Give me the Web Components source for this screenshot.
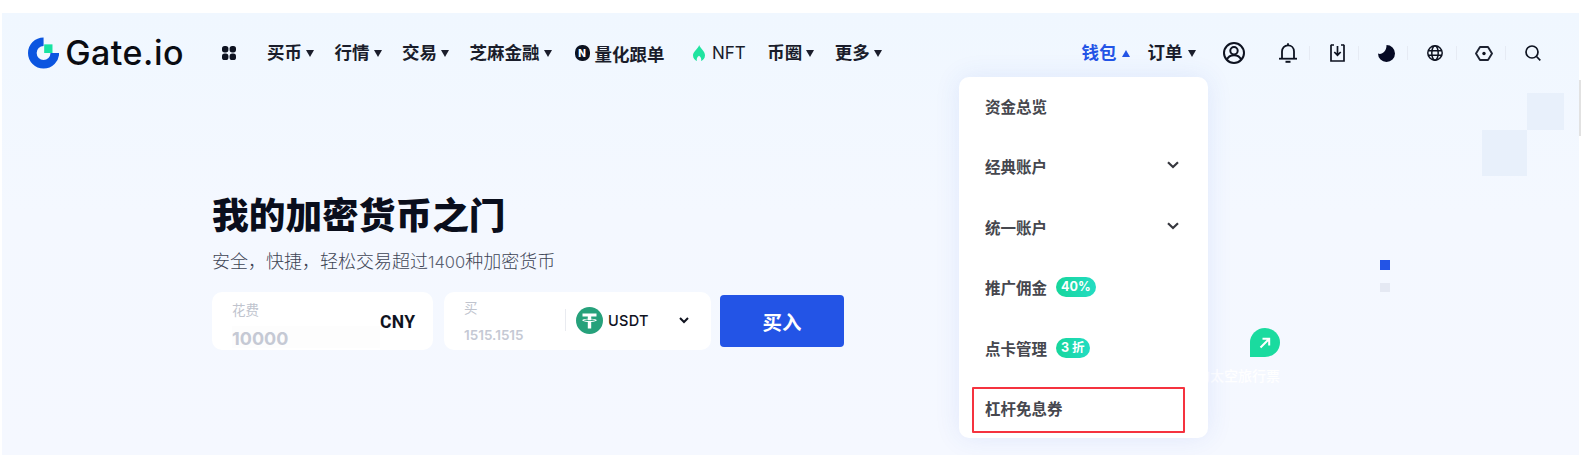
<!DOCTYPE html>
<html lang="zh-CN"><head><meta charset="utf-8"><title>Gate.io</title>
<style>
html,body{margin:0;padding:0;background:#fff;overflow:hidden}
body{font-family:Inter,"Noto Sans CJK SC","Noto Sans",sans-serif}
</style></head><body>
<gate-page>
  <gate-nav slot="nav"></gate-nav>
  <gate-hero slot="hero"></gate-hero>
  <gate-deco slot="deco"></gate-deco>
  <wallet-menu slot="menu"></wallet-menu>
</gate-page>
<script>
const FONT='Inter,"Noto Sans CJK SC","Noto Sans",sans-serif';
function def(name,css,html){
  customElements.define(name,class extends HTMLElement{
    constructor(){super();const r=this.attachShadow({mode:'open'});
      r.innerHTML='<style>'+css+'</style>'+html(this);}
  });
}
def('gate-page',`
:host{display:block;position:relative;margin:13px 2px 0;height:442px;font-family:${FONT};
background:linear-gradient(180deg,#f0f7ff 0%,#f4f8ff 45%,#f5f8ff 100%)}
.bar{position:absolute;right:-2px;top:67px;width:2px;height:56px;background:#e2e2e2}
`,()=>`<slot name="deco"></slot><slot name="nav"></slot><slot name="hero"></slot><slot name="menu"></slot><div class="bar"></div>`);

def('nav-item',`
:host{display:flex;align-items:center;gap:var(--g,5px);font-size:17.5px;font-weight:700;color:#1a1d2b;line-height:24px;white-space:nowrap}
:host([active]){color:#2354e6}
i{width:0;height:0;border-left:4.5px solid transparent;border-right:4.5px solid transparent;border-top:7px solid currentColor;margin-top:1px}
:host([active]) i{border-top:0;border-bottom:7px solid currentColor}
`,()=>`<slot></slot><i></i>`);

def('icon-slot',`
:host{display:flex;align-items:center;justify-content:center;box-sizing:border-box;width:49px;height:24px;padding-left:5px;position:relative}
:host(:not([last]))::after{content:"";position:absolute;right:0;top:5px;height:14px;width:1px;background:#e6ebf4}
`,()=>`<slot></slot>`);

def('gate-nav',`
:host{display:flex;align-items:center;height:80px;box-sizing:border-box;padding:0 24px 0 26px}
.logo{display:flex;align-items:center;gap:6px;width:156px;flex:none}
.word{font-size:34px;font-weight:500;color:#0a0c12;letter-spacing:.5px;line-height:36px}
.left,.right{display:flex;align-items:center}
.left{gap:20.5px;margin-left:38px;--g:4px}
.right{margin-left:auto;gap:18px}
.grid{margin-right:10.5px;display:block}
.pre{display:flex;align-items:center;gap:5px;font-size:17.5px;font-weight:700;color:#1a1d2b;white-space:nowrap;margin-left:2.5px}
.n{width:15px;height:16px;border-radius:7px;background:#0d1220;color:#fff;font-size:10px;font-weight:800;display:flex;align-items:center;justify-content:center;line-height:1}
.pre.nft{font-weight:400;font-size:17px;margin-left:8px;gap:7px;margin-right:1px}
.icons{display:flex;align-items:center;margin-left:1.5px}
.user{margin:0 16px 0 8px;display:block}
svg{display:block}
`,()=>`
<div class="logo">
 <svg width="36" height="36" viewBox="0 0 36 36"><path d="M18 0A18 18 0 1 0 36 18H26A8 8 0 1 1 18 10Z" fill="#0b55e0"/><rect x="18.7" y="8" width="9.6" height="10" fill="#17e3a2"/></svg>
 <span class="word">Gate.io</span>
</div>
<div class="left">
 <svg class="grid" width="14" height="14" viewBox="0 0 14 14" fill="#0d1220"><rect width="6.4" height="6.4" rx="2.6"/><rect x="7.6" width="6.4" height="6.4" rx="2.6"/><rect y="7.6" width="6.4" height="6.4" rx="2.6"/><rect x="7.6" y="7.6" width="6.4" height="6.4" rx="2.6"/></svg>
 <nav-item>买币</nav-item><nav-item>行情</nav-item><nav-item>交易</nav-item><nav-item>芝麻金融</nav-item>
 <div class="pre"><span class="n">N</span><span>量化跟单</span></div>
 <div class="pre nft"><svg width="12" height="16" viewBox="0 0 12 16"><path d="M6.200 0C7 3 12 6 12 10.300 12 13.600 10 15.400 8 16 8.800 13.800 7.800 12.200 6 10.800 4.200 12.200 3.200 13.800 4 16 2 15.400 0 13.600 0 10.300 0 6.500 5 4 6.200 0Z" fill="#1fe3a0"/></svg><span>NFT</span></div>
 <nav-item>币圈</nav-item><nav-item>更多</nav-item>
</div>
<div class="right">
 <nav-item active>钱包</nav-item><nav-item>订单</nav-item>
 <div class="icons">
  <svg class="user" width="22" height="22" viewBox="0 0 22 22" fill="none" stroke="#0d1220" stroke-width="2"><circle cx="11" cy="11" r="10"/><circle cx="11" cy="8.700" r="3.700"/><path d="M3.800 18C5 14.800 7.700 13.200 11 13.200S17 14.800 18.200 18"/></svg>
  <icon-slot><svg width="18" height="20" viewBox="0 0 18 20" fill="none" stroke="#0d1220" stroke-width="1.800"><path d="M3 15.500V8.500C3 5 5.500 2.300 9 2.300S15 5 15 8.500V15.500"/><path d="M0 15.700H18"/><path d="M9 .2V2.300" /><path d="M6.500 18.800H11.500" stroke-width="2"/></svg></icon-slot>
  <icon-slot><svg width="15" height="18" viewBox="0 0 15 18" fill="none" stroke="#0d1220" stroke-width="1.700"><path d="M1 .8V17H14V.8"/><path d="M1 1H4M11 1H14" /><path d="M7.500 2V11M4.300 8L7.500 11.200 10.700 8"/></svg></icon-slot>
  <icon-slot><svg width="17" height="17" viewBox="0 0 17 17"><path d="M8.500 0A8.500 8.500 0 1 1 0 8.500C3.500 10.200 8.700 6.500 8.500 0Z" fill="#050a24"/></svg></icon-slot>
  <icon-slot><svg width="16" height="16" viewBox="0 0 16 16" fill="none" stroke="#0d1220" stroke-width="1.500"><circle cx="8" cy="8" r="7.200"/><ellipse cx="8" cy="8" rx="3.200" ry="7.200"/><path d="M1 5.700H15M1 10.300H15"/></svg></icon-slot>
  <icon-slot><svg width="18" height="15" viewBox="0 0 18 15" fill="none" stroke="#1e2332" stroke-width="1.900"><path d="M5 1H13L17 7.500 13 14H5L1 7.500Z" stroke-linejoin="round"/><circle cx="9" cy="7.500" r="1.700" fill="#0d1220" stroke="none"/></svg></icon-slot>
  <icon-slot last><svg width="16" height="16" viewBox="0 0 16 16" fill="none" stroke="#0d1220" stroke-width="1.700"><circle cx="7" cy="7" r="6"/><path d="M11.500 11.500L15.300 15.300"/></svg></icon-slot>
 </div>
</div>`);

def('gate-hero',`
:host{display:block;padding:101px 0 0 210px;color:#0b0f1e}
h1{margin:0;font-size:36.700px;line-height:44px;font-weight:900;color:#0a0e1c;white-space:nowrap}
p{margin:12px 0 18px;font-size:18px;line-height:24px;font-weight:300;color:#3d4454}
p span{font-family:Inter,sans-serif;font-weight:300;color:#5a6070;font-size:16.500px}
.row{display:flex;align-items:center}
.card{background:#fff;border-radius:10px;height:58px;box-sizing:border-box;display:flex;flex:none}
.c1{width:221px;margin-right:11px;padding:9px 20px 0 20px;justify-content:space-between}
.c2{width:267px;margin-right:9px;padding:7px 22px 0 20px}
.lab{font-size:13.500px;line-height:18px;color:#c0c4ce;font-weight:400}
.val{width:148px;height:22px;line-height:26px;margin-top:7px;background:#fdfdfd;font-size:18px;font-weight:700;color:#c5c9d4;font-family:Inter,sans-serif}
.cny{font-size:17.500px;font-weight:700;color:#10131f;line-height:24px;margin-top:9px;font-family:Roboto,sans-serif;letter-spacing:.4px}
.buy{width:101px;flex:none}
.num{font-size:13.500px;font-weight:600;color:#c5c9d4;line-height:20px;margin-top:8px;font-family:Inter,sans-serif}
.sel{flex:1;display:flex;align-items:center;gap:5px;border:0;height:27px;margin-top:8px;position:relative;padding-left:11px}
.sel::before{content:"";position:absolute;left:0;top:2px;height:22px;width:1px;background:#e9ebf0}
.sel b{font-size:14.500px;font-weight:500;color:#10131f;letter-spacing:.3px}
.sel svg.c{margin-left:auto}
.btn{width:124px;height:52px;background:#2354e6;border-radius:4px;color:#fff;font-size:19.500px;font-weight:700;display:flex;align-items:center;justify-content:center;flex:none}
svg{display:block}
`,()=>`
<h1>我的加密货币之门</h1>
<p>安全，快捷，轻松交易超过<span>1400</span>种加密货币</p>
<div class="row">
 <div class="card c1"><div><div class="lab">花费</div><div class="val">10000</div></div><div class="cny">CNY</div></div>
 <div class="card c2"><div class="buy"><div class="lab">买</div><div class="num">1515.1515</div></div>
  <div class="sel"><svg width="27" height="27" viewBox="0 0 27 27"><circle cx="13.500" cy="13.500" r="13.500" fill="#26a17b"/><path d="M6.500 6.500H20.500V9.500H15.200V11.700C18.300 11.900 20.800 12.500 20.800 13.300S18.300 14.700 15.200 14.900V21.500H11.800V14.900C8.700 14.700 6.200 14.100 6.200 13.300S8.700 11.900 11.800 11.700V9.500H6.500Z" fill="#fff"/><path d="M7.600 13.300C8.400 13.800 10.700 14.100 13.500 14.100S18.600 13.800 19.400 13.300C18.600 12.900 17 12.600 15.200 12.500V13.300H11.800V12.500C10 12.600 8.400 12.900 7.600 13.300Z" fill="#26a17b"/></svg>
   <b>USDT</b>
   <svg class="c" width="10" height="7" viewBox="0 0 10 7" fill="none" stroke="#10131f" stroke-width="2"><path d="M1 1L5 5 9 1"/></svg></div></div>
 <div class="btn">买入</div>
</div>`);

def('gate-deco',`
:host{display:block;position:absolute;inset:0;overflow:hidden;pointer-events:none}
div{position:absolute}
.s1{left:1525px;top:80px;width:37px;height:37px;background:#e8f0fb}
.s2{left:1480px;top:117px;width:45px;height:46px;background:#e8f0fb}
.d1{left:1378px;top:247px;width:10px;height:10px;background:#2354e6}
.d2{left:1378px;top:270px;width:10px;height:9px;background:#e5e9f3}
.bub{left:1248px;top:315px;width:30px;height:29px;background:#1adb9f;border-radius:50% 50% 50% 0;display:flex;align-items:center;justify-content:center}
.txt{left:1190px;top:353px;width:88px;text-align:right;font-size:14px;line-height:20px;font-weight:500;color:#fff;white-space:nowrap}
`,()=>`<div class="s1"></div><div class="s2"></div><div class="d1"></div><div class="d2"></div>
<div class="bub"><svg width="12" height="12" viewBox="0 0 12 12" fill="none" stroke="#fff" stroke-width="2"><path d="M1.500 10.500L10 2M3.500 1.800H10.200V8.500"/></svg></div>
<div class="txt">的太空旅行票</div>`);

def('menu-row',`
:host{display:flex;align-items:center;justify-content:space-between;padding:0 29px 3px 26px;font-size:15.500px;font-weight:700;color:#46474e;position:relative;white-space:nowrap}
.l{display:flex;align-items:center;gap:9px}
:host([boxed])::after{content:"";position:absolute;left:13px;top:7.500px;width:213px;height:46px;box-sizing:border-box;border:2px solid #f5333f;border-radius:1px}
svg{display:block;margin-top:-2px}
`,el=>`<div class="l"><slot></slot></div>${el.hasAttribute('more')?'<svg width="12" height="8" viewBox="0 0 12 8" fill="none" stroke="#36373e" stroke-width="2.200"><path d="M1 1.200L6 6 11 1.200"/></svg>':''}`);

def('menu-badge',`
:host{display:inline-flex;align-items:center;justify-content:center;height:20px;padding:0 5px;border-radius:10px;background:linear-gradient(90deg,#17d69b,#23dcc3);color:#fff;font-size:12.500px;font-weight:700;line-height:20px;font-family:Inter,"Noto Sans CJK SC",sans-serif}
`,()=>`<slot></slot>`);

def('wallet-menu',`
:host{position:absolute;left:957px;top:64px;width:249px;height:361px;background:#fff;border-radius:10px;box-shadow:0 0 26px rgba(50,90,220,.10);display:grid;grid-template-rows:repeat(6,60.500px);align-content:start}
`,()=>`
<menu-row>资金总览</menu-row>
<menu-row more>经典账户</menu-row>
<menu-row more>统一账户</menu-row>
<menu-row>推广佣金<menu-badge>40%</menu-badge></menu-row>
<menu-row>点卡管理<menu-badge>3 折</menu-badge></menu-row>
<menu-row boxed>杠杆免息券</menu-row>`);
</script>
</body></html>
